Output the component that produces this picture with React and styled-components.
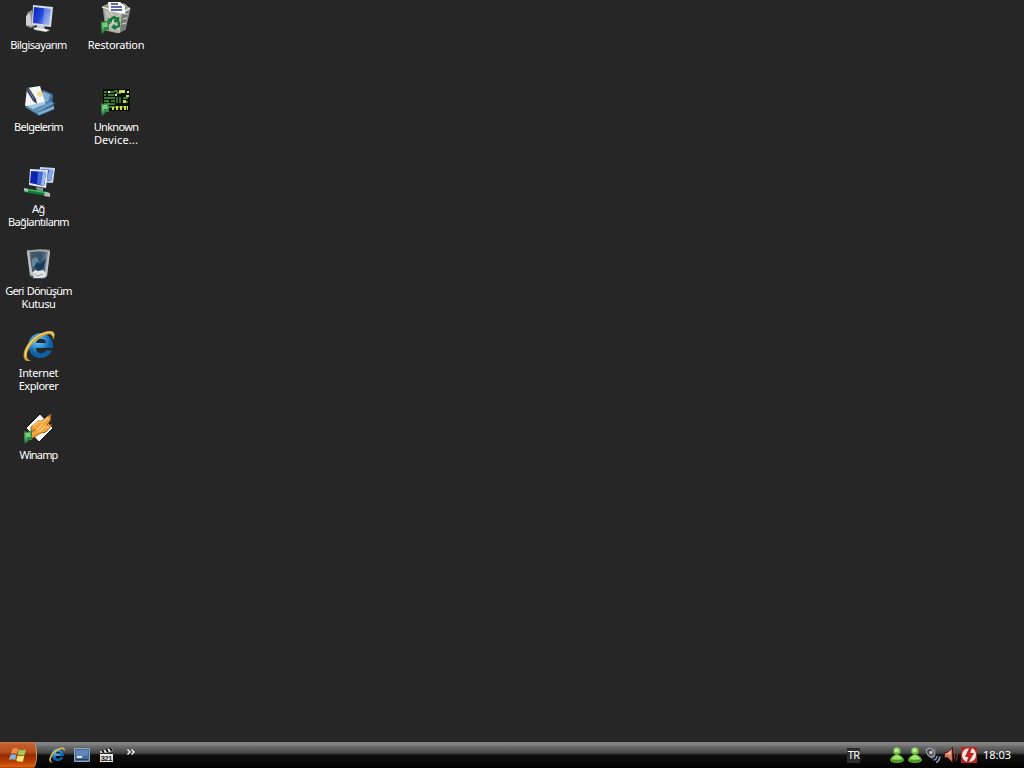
import React from 'react';
import styled, { createGlobalStyle } from 'styled-components';

const GlobalStyle = createGlobalStyle`
  body {
    margin: 0;
    background: #262626;
    overflow: hidden;
  }
`;

const Screen = styled.div`
  display: flex;
  flex-direction: column;
  width: 1024px;
  height: 768px;
  background: #262626;
  color: #fff;
  font-family: 'Noto Sans', 'DejaVu Sans', sans-serif;
  font-size: 11px;
  cursor: default;
  user-select: none;
`;

const Desktop = styled.main`
  flex: 1;
  display: flex;
  align-items: flex-start;
`;

const IconColumn = styled.div`
  display: flex;
  flex-direction: column;
  width: ${(p) => p.$width}px;
`;

const Shortcut = styled.div`
  display: flex;
  flex-direction: column;
  align-items: center;
  height: 80px;
  padding: 2px 0 0 1px;

  svg {
    display: block;
    flex: none;
    margin-bottom: 4px;
  }
`;

const LabelLine = styled.span`
  line-height: 13px;
  white-space: nowrap;
  letter-spacing: ${(p) => p.$spacing || 0}px;
  word-spacing: 1px;
`;

// Taskbar
const Taskbar = styled.footer`
  display: flex;
  align-items: stretch;
  height: 26px;
  background: linear-gradient(
    #7e7e7e 0,
    #858585 2px,
    #686868 5px,
    #454545 11px,
    #101010 13px,
    #000 100%
  );
`;

const StartButton = styled.div`
  box-sizing: border-box;
  display: flex;
  align-items: center;
  width: 37px;
  padding-left: 9px;
  border-right: 1px solid #e39a5e;
  border-radius: 0 4px 4px 0 / 0 13px 13px 0;
  background: linear-gradient(#d0774c 0, #c4602e 2px, #b5501e 10px, #952b00 13px, #b84004 20px, #dd640e 25px, #7d2800 26px);
`;

const QuickLaunch = styled.div`
  display: flex;
  align-items: center;
  gap: 9px;
  padding-left: 12px;
`;

const Chevron = styled.div`
  display: flex;
  padding: 7px 0 0 12px;
`;

const Language = styled.div`
  display: flex;
  justify-content: center;
  align-self: center;
  width: 13px;
  height: 15px;
  margin: 0 29px 0 auto;
  background: #2b2b2b;
  line-height: 14px;
  letter-spacing: -0.7px;
`;

const Tray = styled.div`
  display: flex;
  align-items: center;
  gap: 2px;
`;

const Clock = styled.time`
  align-self: flex-start;
  width: 29px;
  padding: 5px 12px 0 6px;
  line-height: 15px;
  white-space: nowrap;
`;

const GreenArrow = () => (
  <>
    <path d="M1 19l3 1 5-2v10l-3 0-4 4-1-5z" fill="#2f8a42" />
    <path d="M2 21q4 0 5-1l1 5-4 0-1 4z" fill="#7ec783" />
  </>
);

const ComputerIcon = () => (
  <svg width="32" height="32" viewBox="0 0 32 32">
    <defs>
      <linearGradient id="pcScreen" x2="1" y2=".5">
        <stop stopColor="#0820b0" />
        <stop offset=".55" stopColor="#2546d8" />
        <stop offset="1" stopColor="#9bb6f1" />
      </linearGradient>
    </defs>
    <path d="M4 11l5-3 3 16-4 2-5-2z" fill="#8f9396" />
    <path d="M3 14l4-3 2 13-6-1z" fill="#cfd0ce" />
    <path d="M14 23l7 1 1 3 5 1-4 2-11-2-2-2 4-1z" fill="#c8cccf" />
    <path d="M12 26l9 1 5 1-4 1-11-2z" fill="#f3f3ee" />
    <path d="M10 3l20 2-2 20-19-2z" fill="#d6dde6" />
    <path d="M11 5l17 2-2 16-16-2z" fill="url(#pcScreen)" />
    <path d="M21 6l7 1-2 16-6-1z" fill="#93aee9" opacity=".45" />
  </svg>
);

const DocumentsIcon = () => (
  <svg width="32" height="32" viewBox="0 0 32 32">
    <path d="M2 23l10-4 18-9v5l-1 3 3 1-2 4 2 2-16 7z" fill="#35658e" />
    <path d="M14 29l17-7v3l-15 6z" fill="#83add0" />
    <path d="M12 25l17-8 1 3-15 8z" fill="#6b9bc4" />
    <path d="M14 20l6-14 9 4-2 8-13 7z" fill="#4f7fa8" />
    <path d="M15 19l6-11 6 3-2 6-10 5z" fill="#82add0" />
    <path d="M2 23l11-2 2 9z" fill="#5e94b8" />
    <path d="M4 4l13-2 5 16-10 4-10 0z" fill="#f3f6f5" />
    <path d="M4 22l17-4 2 2-13 5z" fill="#a7cbdd" />
    <circle cx="17" cy="10" r="2.800" fill="#eddb92" />
    <path d="M3 4l3 0 7 11 1 5-4-3L3 6z" fill="#34405f" />
    <path d="M5 5l6 10" stroke="#7289aa" />
  </svg>
);

const NetworkIcon = () => (
  <svg width="32" height="32" viewBox="0 0 32 32">
    <path d="M17 1l15 1-2 15-14-1z" fill="#ccd5ed" />
    <path d="M18 3l12 1-2 11-12-1z" fill="#2448bc" />
    <path d="M26 4l4 0-2 11-4-1z" fill="#84a5e0" />
    <path d="M7 3l18 1-2 18-17-3z" fill="#e5e9f0" />
    <path d="M8 5l15 1-2 14-14-3z" fill="#0925ad" />
    <path d="M15 6l8 0-2 14-7-2z" fill="#456ad1" />
    <path d="M20 6l3 0-2 14-3-1z" fill="#9bb9ed" />
    <path d="M13 21l7 1v4l-6-1z" fill="#8e9597" />
    <path d="M1 24l24 4" stroke="#0c7c39" strokeWidth="4" />
    <path d="M1 23l24 4" stroke="#52c877" strokeWidth="1.2" />
    <path d="M1 22l4 1v3l-4-1zM22 26l5 1v4l-6-1z" fill="#b5bab7" />
  </svg>
);

const RecycleIcon = () => (
  <svg width="32" height="32" viewBox="0 0 32 32">
    <defs>
      <linearGradient id="glass" x2="1">
        <stop stopColor="#aab2b6" />
        <stop offset=".2" stopColor="#4a5966" />
        <stop offset=".6" stopColor="#31526f" />
        <stop offset="1" stopColor="#8e989f" />
      </linearGradient>
    </defs>
    <path d="M4 2h23l-3 26-3 3H10l-3-3z" fill="url(#glass)" />
    <path d="M4 3q11-3 23-1l-1 3Q15 3 4 5z" fill="#9ba4aa" />
    <path d="M6 4.500q9-2 19 0-9 2-19 0z" fill="#485663" />
    <path d="M4 4h2l4 24-3-1zM25 4h2l-3 24-3 2z" fill="#b9c0c4" />
    <path d="M9 11l5-2 2 5-4 6-3-2z" fill="#6584a0" />
    <path d="M14 14l3 2 6-5-2 6 0 3-5 3-5-4z" fill="#173b5c" />
    <path d="M9 25l3-3 3 1 5-1 3 3-1 4-3 1h-8z" fill="#e2e4e1" />
    <path d="M11 26l4 2 5-2" stroke="#8c9ba5" fill="none" />
  </svg>
);

const ExplorerIcon = ({ size = 32 }) => (
  <svg width={size} height={size} viewBox="0 0 32 32">
    <defs>
      <radialGradient id="ieBlue" cx=".4" cy=".3">
        <stop stopColor="#7fd5fb" />
        <stop offset=".5" stopColor="#3b9bdc" />
        <stop offset="1" stopColor="#1060a8" />
      </radialGradient>
    </defs>
    <path d="M29 20.500A12.500 12.500 0 1 1 30 15v3H13c0 6 8 7 10 2.500z" fill="url(#ieBlue)" />
    <path d="M13 13h10c0-5-9-6-10 0z" fill="#202a32" />
    <path d="M9 30C1 34-2 26 3 17 8 7 21 0 28 1c5 1 4 5 2 9 0-5-2-7-7-5C12 8 3 20 4 26c0 3 2 5 5 4z" fill="#cda437" />
    <path d="M2.500 27C1 18 11 6 22 3c5-2 9-1 8 3" fill="none" stroke="#f0d878" strokeWidth="1.2" />
  </svg>
);

const WinampIcon = () => (
  <svg width="32" height="32" viewBox="0 0 32 32">
    <path d="M17 2l13 14-14 14L3 16z" fill="#fff" stroke="#151515" />
    <path d="M8 15l7-6 4 0 9-7-1 4 1 1-4 6 5 0-6 7-5 1-12 7 2-5-1-2 5-3-4 0z" fill="#f0a43a" stroke="#a8641c" />
    <path d="M10 14l5-4h5l5-5M14 18l6-6M16 20l5-5h5" fill="none" stroke="#ffd183" strokeWidth="1.2" />
    <GreenArrow />
  </svg>
);

const RestorationIcon = () => (
  <svg width="32" height="32" viewBox="0 0 32 32">
    <path d="M2 4l6-3h17l6 6-5 21-8 4-13-3z" fill="#92938c" stroke="#222" />
    <path d="M4 7l18 5-2 19-13-3z" fill="#b5b5ae" />
    <path d="M22 12l7-5-4 20-5 4z" fill="#767872" />
    <path d="M6 10l14 19M9 9l12 14M20 12L8 27M24 12l4 0M23 17l4-1M22 22l4-1" stroke="#dcdcd5" strokeWidth="1" />
    <path d="M2 5l20 6 8-5" fill="none" stroke="#e4e4dc" strokeWidth="1.800" />
    <path d="M8 0h12l5 4v8L9 9z" fill="#fff" />
    <path d="M11 2h7M11 5h11M11 8h11" stroke="#26388a" strokeWidth="1.300" />
    <path d="M10 18l4-3 4 3M18 15v4h-4M19 20v4l-5 2M15 23l-2 2 3 2M9 22v-4l3 1" fill="none" stroke="#137936" strokeWidth="2.400" />
    <GreenArrow />
  </svg>
);

const DeviceIcon = () => (
  <svg width="32" height="32" viewBox="0 0 32 32">
    <path d="M3 5h27v22H3z" fill="#050d04" />
    <path d="M4 8h3M9 8h5M4 11h2M8 11h6M4 14h11M4 17h5M11 17h4M4 20h11M14 7h3v2h4M17 13v6M20 13v6M23 14h5M23 18h5M9 23h19" fill="none" stroke="#4f9c3e" strokeWidth="1.300" />
    <path d="M19 6h6v3h-6zM26 11h3v2h-3zM23 16h3v3h-3zM12 23h2v3h-2zM16 22h2v4h-2zM20 22h2v4h-2zM24 22h2v4h-2zM27 22h1v4h-1z" fill="#d9d848" />
    <path d="M8 7h2v2H8zM15 10h2v2h-2zM27 7h2v2h-2z" fill="#e7edc2" />
    <GreenArrow />
  </svg>
);

const WindowsLogo = () => (
  <svg width="18" height="18" viewBox="0 0 18 18">
    <path d="M3.500 3q3-2 6 0L7.800 8Q5 6.500 2 8z" fill="#f08a4a" />
    <path d="M10 3.500q3 1.500 7 0L15.500 9q-4 1-6.800-.5z" fill="#9ccc5a" />
    <path d="M1.500 9Q4.500 7.500 7.500 9l-1.300 5Q3 12.500 0 14z" fill="#7db4de" />
    <path d="M8.500 9.500q3 1.500 6.700 0L14 15.500q-3.500 1-6.800-1z" fill="#ffe878" />
  </svg>
);

const ShowDesktopIcon = () => (
  <svg width="16" height="16" viewBox="0 0 16 16">
    <path d="M.5 1.500h15v13H.5z" fill="#486c9a" stroke="#93a3ba" />
    <path d="M2 3h12v5L2 11z" fill="#6286b5" />
    <path d="M3 9h5v2H3z" fill="#e0e8f2" />
    <path d="M2 12h12v1H2z" fill="#263d5f" />
  </svg>
);

const ClapperText = styled.text`
  font: bold 8px 'Liberation Sans', sans-serif;
  fill: #222;
`;

const ClapperIcon = () => (
  <svg width="16" height="16" viewBox="0 0 16 16">
    <path d="M1 4l12-3 1 3L2 7zM1 7h13v8H1z" fill="#e9e9e5" />
    <path d="M3 3l2 3M7 2l2 3M11 1l2 3" stroke="#111" strokeWidth="2" />
    <path d="M2 6.500h12" stroke="#222" strokeDasharray="2 1" />
    <ClapperText x="1.500" y="14" textLength="12">321</ClapperText>
  </svg>
);

const BuddyIcon = () => (
  <svg width="16" height="16" viewBox="0 0 16 16">
    <path d="M1 13Q2 8.500 8 7.500 14 8.500 15 13q-1 3-7 3t-7-3z" fill="#5fae35" />
    <path d="M3 12q2-4 5-4t5 4q-5 1-10 0z" fill="#a5df70" />
    <circle cx="8" cy="4" r="3.800" fill="#6dbb41" />
    <circle cx="7.600" cy="3.300" r="2.300" fill="#b9eb8c" />
    <path d="M3 13.500q5 1.500 10 0" fill="none" stroke="#2f8a17" />
  </svg>
);

const SoundIcon = () => (
  <svg width="16" height="16" viewBox="0 0 16 16">
    <path d="M0 2l6-1 5 1-1 8-3 2-4-3z" fill="#73787c" />
    <ellipse cx="5.500" cy="5.500" rx="4.500" ry="3.500" transform="rotate(50 5.500 5.500)" fill="#4a5055" stroke="#a9adb0" />
    <circle cx="6" cy="5.500" r="1.700" fill="#c5cace" />
    <path d="M8.500 13q3 0 3.500-4M11 15.500q3-1 4-6" fill="none" stroke="#8192b2" strokeWidth="1.700" />
  </svg>
);

const RedSpeakerIcon = () => (
  <svg width="16" height="16" viewBox="0 0 16 16">
    <path d="M1.500 5.500h3l5-5v15l-5-5h-3z" fill="#cf7961" stroke="#53170f" />
    <path d="M3 7l5-4v5z" fill="#eaac96" />
    <path d="M11 4q2 4 0 8M13 2q3 6 0 12" fill="none" stroke="#8d4136" />
  </svg>
);

const PowerIcon = () => (
  <svg width="16" height="16" viewBox="0 0 16 16">
    <path d="M0 0h16v16H0z" fill="#b92322" />
    <path d="M8 1Q1 2 1 8q0 5 5 7l1-5H4zM11 1L9 6h4l-5 9q7-1 7-7 0-5-4-7z" fill="#f4e8e4" />
    <path d="M10 0L4.500 9H8l-2 6 6.500-8H9z" fill="#cc2020" />
  </svg>
);

// each label line carries its own tracking
const leftColumn = [
  { icon: <ComputerIcon />, lines: [['Bilgisayarım', -0.57]] },
  { icon: <DocumentsIcon />, lines: [['Belgelerim', -0.7]] },
  { icon: <NetworkIcon />, lines: [['Ağ', -0.3], ['Bağlantılarım', -0.65]] },
  { icon: <RecycleIcon />, lines: [['Geri Dönüşüm', -0.8], ['Kutusu', -0.4]] },
  { icon: <ExplorerIcon />, lines: [['Internet', -0.35], ['Explorer', -0.45]] },
  { icon: <WinampIcon />, lines: [['Winamp', -0.85]] },
];

const rightColumn = [
  { icon: <RestorationIcon />, lines: [['Restoration', -0.3]] },
  { icon: <DeviceIcon />, lines: [['Unknown', -0.7], ['Device...', 0.15]] },
];

const ShortcutList = ({ items, width }) => (
  <IconColumn $width={width}>
    {items.map((item) => (
      <Shortcut key={item.lines[0][0]}>
        {item.icon}
        {item.lines.map(([text, spacing]) => (
          <LabelLine key={text} $spacing={spacing}>{text}</LabelLine>
        ))}
      </Shortcut>
    ))}
  </IconColumn>
);

const App = () => (
  <>
    <GlobalStyle />
    <Screen>
      <Desktop>
        <ShortcutList items={leftColumn} width={76} />
        <ShortcutList items={rightColumn} width={79} />
      </Desktop>
      <Taskbar>
        <StartButton>
          <WindowsLogo />
        </StartButton>
        <QuickLaunch>
          <ExplorerIcon size={16} />
          <ShowDesktopIcon />
          <ClapperIcon />
        </QuickLaunch>
        <Chevron>
          <svg width="8" height="6" viewBox="0 0 8 6">
            <path d="M.5.500L3 3 .5 5.500M4.500.500L7 3 4.500 5.500" fill="none" stroke="#fff" strokeWidth="1.400" />
          </svg>
        </Chevron>
        <Language>TR</Language>
        <Tray>
          <BuddyIcon />
          <BuddyIcon />
          <SoundIcon />
          <RedSpeakerIcon />
          <PowerIcon />
        </Tray>
        <Clock>18:03</Clock>
      </Taskbar>
    </Screen>
  </>
);

export default App;
